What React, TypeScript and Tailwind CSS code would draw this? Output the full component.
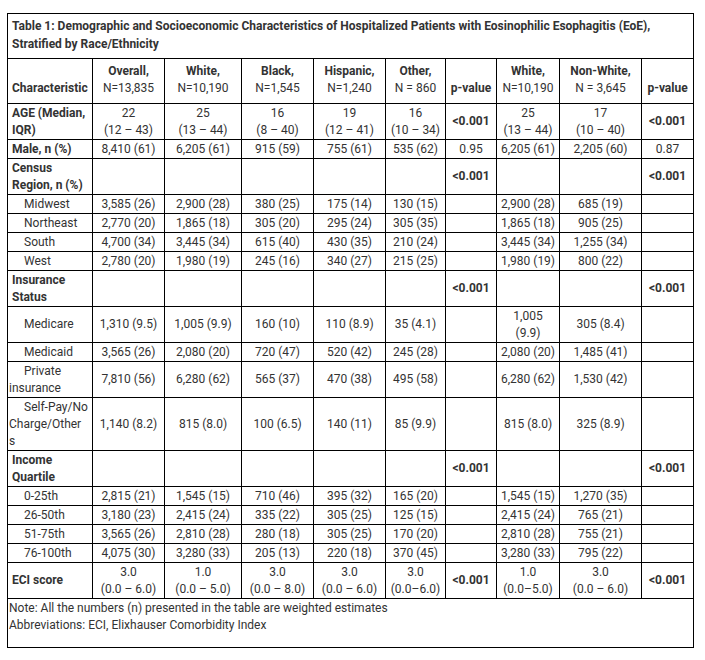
import React from 'react'

// Table 1: características demográficas por raça/etnia
type Row = {
  label: React.ReactNode
  kind: 'group' | 'sub'
  cells: React.ReactNode[]
}

const P = <span className="font-bold">&lt;0.001</span>

const rows: Row[] = [
  {
    label: <>AGE (Median,<br />IQR)</>,
    kind: 'group',
    cells: [
      <>22<br />(12 – 43)</>, <>25<br />(13 – 44)</>, <>16<br />(8 – 40)</>, <>19<br />(12 – 41)</>,
      <>16<br />(10 – 34)</>, P, <>25<br />(13 – 44)</>, <>17<br />(10 – 40)</>, P,
    ],
  },
  {
    label: 'Male, n (%)',
    kind: 'group',
    cells: ['8,410 (61)', '6,205 (61)', '915 (59)', '755 (61)', '535 (62)', '0.95', '6,205 (61)', '2,205 (60)', '0.87'],
  },
  {
    label: <>Census<br />Region, n (%)</>,
    kind: 'group',
    cells: ['', '', '', '', '', P, '', '', P],
  },
  { label: 'Midwest', kind: 'sub', cells: ['3,585 (26)', '2,900 (28)', '380 (25)', '175 (14)', '130 (15)', '', '2,900 (28)', '685 (19)', ''] },
  { label: 'Northeast', kind: 'sub', cells: ['2,770 (20)', '1,865 (18)', '305 (20)', '295 (24)', '305 (35)', '', '1,865 (18)', '905 (25)', ''] },
  { label: 'South', kind: 'sub', cells: ['4,700 (34)', '3,445 (34)', '615 (40)', '430 (35)', '210 (24)', '', '3,445 (34)', '1,255 (34)', ''] },
  { label: 'West', kind: 'sub', cells: ['2,780 (20)', '1,980 (19)', '245 (16)', '340 (27)', '215 (25)', '', '1,980 (19)', '800 (22)', ''] },
  {
    label: <>Insurance<br />Status</>,
    kind: 'group',
    cells: ['', '', '', '', '', P, '', '', P],
  },
  { label: 'Medicare', kind: 'sub', cells: ['1,310 (9.5)', '1,005 (9.9)', '160 (10)', '110 (8.9)', '35 (4.1)', '', <>1,005<br />(9.9)</>, '305 (8.4)', ''] },
  { label: 'Medicaid', kind: 'sub', cells: ['3,565 (26)', '2,080 (20)', '720 (47)', '520 (42)', '245 (28)', '', '2,080 (20)', '1,485 (41)', ''] },
  { label: <>Private<br />insurance</>, kind: 'sub', cells: ['7,810 (56)', '6,280 (62)', '565 (37)', '470 (38)', '495 (58)', '', '6,280 (62)', '1,530 (42)', ''] },
  { label: <>Self-Pay/No<br />Charge/Other<br />s</>, kind: 'sub', cells: ['1,140 (8.2)', '815 (8.0)', '100 (6.5)', '140 (11)', '85 (9.9)', '', '815 (8.0)', '325 (8.9)', ''] },
  {
    label: <>Income<br />Quartile</>,
    kind: 'group',
    cells: ['', '', '', '', '', P, '', '', P],
  },
  { label: '0-25th', kind: 'sub', cells: ['2,815 (21)', '1,545 (15)', '710 (46)', '395 (32)', '165 (20)', '', '1,545 (15)', '1,270 (35)', ''] },
  { label: '26-50th', kind: 'sub', cells: ['3,180 (23)', '2,415 (24)', '335 (22)', '305 (25)', '125 (15)', '', '2,415 (24)', '765 (21)', ''] },
  { label: '51-75th', kind: 'sub', cells: ['3,565 (26)', '2,810 (28)', '280 (18)', '305 (25)', '170 (20)', '', '2,810 (28)', '755 (21)', ''] },
  { label: '76-100th', kind: 'sub', cells: ['4,075 (30)', '3,280 (33)', '205 (13)', '220 (18)', '370 (45)', '', '3,280 (33)', '795 (22)', ''] },
  {
    label: 'ECI score',
    kind: 'group',
    cells: [
      <>3.0<br />(0.0 – 6.0)</>, <>1.0<br />(0.0 – 5.0)</>, <>3.0<br />(0.0 – 8.0)</>, <>3.0<br />(0.0 – 6.0)</>,
      <>3.0<br />(0.0–6.0)</>, P, <>1.0<br />(0.0–5.0)</>, <>3.0<br />(0.0 – 6.0)</>, P,
    ],
  },
]

const widths = [85, 72, 77, 72, 72, 60, 51, 63, 82, 52]

const headers: { top?: string; bottom: string }[] = [
  { top: 'Overall,', bottom: 'N=13,835' },
  { top: 'White,', bottom: 'N=10,190' },
  { top: 'Black,', bottom: 'N=1,545' },
  { top: 'Hispanic,', bottom: 'N=1,240' },
  { top: 'Other,', bottom: 'N = 860' },
  { bottom: 'p-value' },
  { top: 'White,', bottom: 'N=10,190' },
  { top: 'Non-White,', bottom: 'N = 3,645' },
  { bottom: 'p-value' },
]

export default function App() {
  const cell = 'border border-black px-0 py-[0.5px] align-middle text-center whitespace-nowrap'

  return (
    <div className="min-h-[660px] w-[705px] bg-white pl-[7px] pt-[13px] text-[12px] leading-[17px] text-[#333] [font-family:Roboto,'Noto_Sans',sans-serif]">
      <table className="w-[687px] table-fixed border-collapse">
        <colgroup>
          {widths.map((w, i) => (
            <col key={i} style={{ width: w }} />
          ))}
        </colgroup>
        <tbody>
          {/* --- Título --- */}
          <tr>
            <td colSpan={10} className="border border-black pl-[4px] pt-[3px] pb-[5px] leading-[18px] font-bold">
              Table 1: Demographic and Socioeconomic Characteristics of Hospitalized Patients with Eosinophilic Esophagitis (EoE),
              <br />
              Stratified by Race/Ethnicity
            </td>
          </tr>

          {/* --- Cabeçalho --- */}
          <tr>
            <td className="border border-black pl-[4px] pb-[6px] pt-[4px] align-bottom font-bold whitespace-nowrap">
              Characteristic
            </td>
            {headers.map((h, i) => (
              <td key={i} className="border border-black pb-[6px] pt-[4px] text-center align-bottom whitespace-nowrap">
                {h.top ? (
                  <>
                    <span className="font-bold">{h.top}</span>
                    <br />
                    {h.bottom}
                  </>
                ) : (
                  <span className="font-bold">{h.bottom}</span>
                )}
              </td>
            ))}
          </tr>

          {/* --- Linhas de dados --- */}
          {rows.map((r, i) => (
            <tr key={i}>
              <td
                className={
                  r.kind === 'group'
                    ? 'border border-black pl-[4px] py-[0.5px] align-middle font-bold whitespace-nowrap'
                    : 'border border-black pl-[1px] py-[0.5px] align-middle indent-[15px] whitespace-nowrap'
                }
              >
                {r.label}
              </td>
              {r.cells.map((c, j) => (
                <td key={j} className={cell}>
                  {c}
                </td>
              ))}
            </tr>
          ))}

          {/* --- Nota --- */}
          <tr>
            <td colSpan={10} className="h-[49px] border border-black pl-[1px] pt-[1px] align-top">
              Note: All the numbers (n) presented in the table are weighted estimates
              <br />
              Abbreviations: ECI, Elixhauser Comorbidity Index
            </td>
          </tr>
        </tbody>
      </table>
    </div>
  )
}
